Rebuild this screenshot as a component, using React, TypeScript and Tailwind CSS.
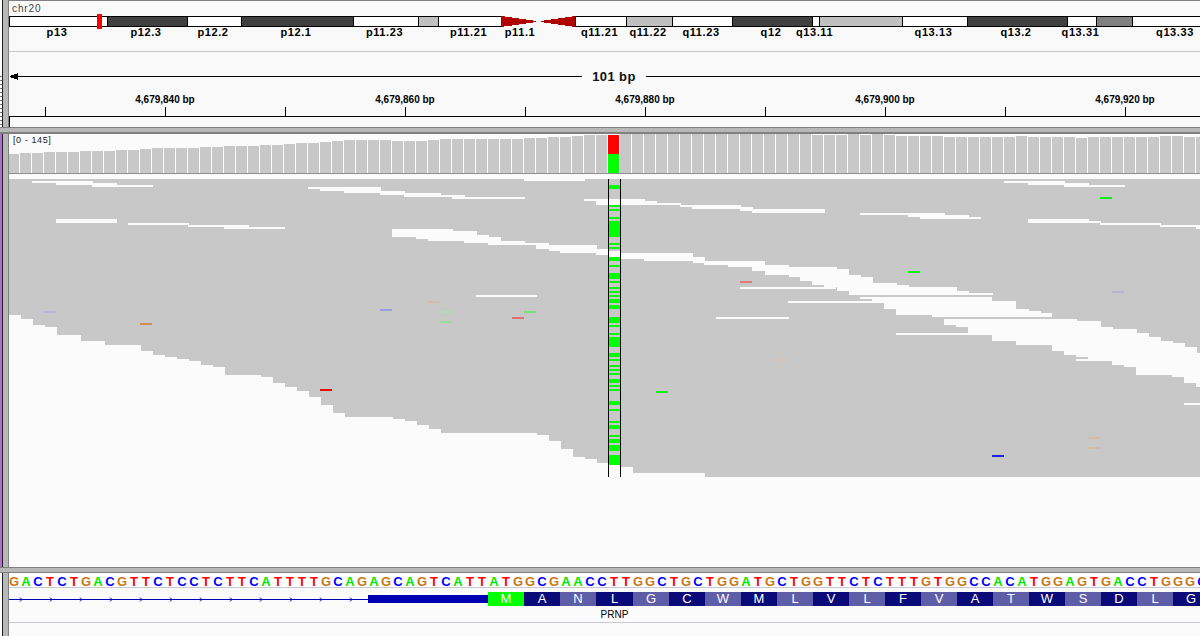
const sans = "font-['Liberation_Sans',Arial,sans-serif]"

interface Band {
  name: string
  width: number
  color: string
  centromere?: 'left' | 'right'
}

const BANDS: Band[] = [
  { name: 'p13', width: 98, color: 'bg-white' },
  { name: 'p12.3', width: 80, color: 'bg-[#404040]' },
  { name: 'p12.2', width: 54, color: 'bg-white' },
  { name: 'p12.1', width: 112, color: 'bg-[#404040]' },
  { name: 'p11.23', width: 65, color: 'bg-white' },
  { name: '', width: 20, color: 'bg-[#c0c0c0]' },
  { name: 'p11.21', width: 63, color: 'bg-white' },
  { name: 'p11.1', width: 40, color: '', centromere: 'left' },
  { name: '', width: 34, color: '', centromere: 'right' },
  { name: 'q11.21', width: 51, color: 'bg-white' },
  { name: 'q11.22', width: 46, color: 'bg-[#c0c0c0]' },
  { name: 'q11.23', width: 60, color: 'bg-white' },
  { name: 'q12', width: 80, color: 'bg-[#404040]' },
  { name: 'q13.11', width: 7, color: 'bg-white' },
  { name: '', width: 83, color: 'bg-[#c0c0c0]' },
  { name: 'q13.13', width: 65, color: 'bg-white' },
  { name: 'q13.2', width: 100, color: 'bg-[#404040]' },
  { name: 'q13.31', width: 29, color: 'bg-white' },
  { name: '', width: 36, color: 'bg-[#808080]' },
  { name: 'q13.33', width: 88, color: 'bg-white' },
]

const POSITIONS = ['4,679,840 bp', '4,679,860 bp', '4,679,880 bp', '4,679,900 bp', '4,679,920 bp']

const COVERAGE_RUNS: [number, number][] = [
  [154, 1], [153, 2], [152, 3], [151, 3], [150, 2], [149, 1], [148, 4], [147, 2], [146, 3], [145, 2],
  [144, 1], [143, 2], [142, 1], [141, 1], [140, 4], [141, 3], [140, 1], [139, 7], [138, 2], [137, 2],
  [136, 1], [135, 3], [134, 16], [135, 3], [134, 1], [135, 1], [134, 1], [135, 1], [136, 4], [137, 6],
  [136, 1], [137, 4], [138, 1], [137, 6], [136, 2], [137, 2],
]
const COVERAGE_TOPS = COVERAGE_RUNS.flatMap(([top, n]) => Array<number>(n).fill(top))

// lower edge of the pileup: [x, y] steps
const PROFILE: [number, number][] = [
  [9, 315], [21, 319], [33, 325], [45, 327], [57, 335], [81, 341], [105, 345], [141, 351], [153, 355],
  [165, 357], [177, 359], [189, 361], [201, 365], [213, 367], [225, 375], [261, 377], [273, 383],
  [285, 387], [297, 391], [309, 397], [321, 405], [333, 413], [345, 417], [393, 419], [405, 421],
  [417, 425], [429, 429], [441, 433], [537, 435], [549, 441], [561, 449], [573, 457], [585, 459],
  [597, 463], [609, 465], [621, 467], [633, 473], [705, 477], [1200, 477],
]

// gaps between reads: x0, x1, y0, y1
const GAPS: number[][] = [
  [9, 1200, 174, 179], [32, 56, 181, 183], [56, 93, 181, 185], [92, 117, 183, 187], [117, 153, 185, 187],
  [308, 320, 187, 189], [320, 344, 187, 191], [344, 381, 187, 193], [380, 405, 191, 195], [404, 441, 193, 197],
  [441, 465, 195, 197], [452, 525, 197, 199], [524, 585, 179, 181], [584, 645, 199, 201], [596, 645, 199, 205],
  [645, 657, 201, 205], [657, 681, 203, 205], [680, 692, 205, 207], [692, 741, 205, 209], [740, 753, 207, 211],
  [752, 825, 209, 213], [860, 908, 213, 215], [908, 920, 213, 217], [920, 945, 213, 219], [945, 969, 215, 219],
  [969, 981, 217, 219], [1004, 1028, 181, 183], [1028, 1065, 181, 185], [1064, 1089, 183, 187], [1089, 1125, 185, 187],
  [1028, 1089, 219, 223], [1089, 1101, 221, 223], [1100, 1161, 223, 225], [1160, 1196, 225, 227], [1196, 1200, 225, 229],
  [56, 117, 219, 223], [128, 189, 223, 225], [188, 224, 225, 227], [224, 249, 225, 229], [249, 285, 227, 229],
  [392, 453, 229, 237], [416, 428, 237, 239], [428, 464, 237, 241], [453, 477, 231, 241], [464, 489, 235, 243],
  [489, 501, 237, 245], [488, 525, 241, 245], [525, 536, 243, 245], [536, 549, 243, 249], [549, 560, 245, 251],
  [560, 597, 245, 253], [596, 609, 249, 255], [609, 621, 251, 257], [621, 644, 253, 259], [644, 693, 253, 261],
  [693, 705, 257, 263], [704, 728, 261, 265], [728, 752, 261, 267], [752, 765, 261, 271], [765, 789, 265, 275],
  [789, 800, 267, 277], [800, 812, 267, 281], [812, 824, 267, 285], [824, 837, 267, 287], [837, 849, 269, 291],
  [849, 861, 275, 295], [861, 873, 277, 295], [873, 897, 283, 295], [897, 909, 285, 295], [909, 957, 287, 295],
  [957, 969, 291, 295], [969, 993, 293, 295], [740, 836, 287, 289], [788, 872, 301, 303], [716, 789, 317, 319],
  [476, 537, 295, 297], [860, 872, 297, 299], [872, 884, 297, 303], [884, 896, 297, 309], [896, 932, 297, 315],
  [932, 944, 297, 317], [944, 956, 297, 325], [956, 968, 297, 327], [968, 992, 297, 335], [896, 968, 333, 335],
  [992, 1016, 301, 341], [1016, 1029, 309, 345], [1029, 1041, 311, 345], [1041, 1052, 313, 345], [1052, 1064, 319, 351],
  [1064, 1076, 319, 355], [1076, 1077, 319, 361], [1077, 1101, 321, 361], [1101, 1112, 327, 361], [1112, 1113, 327, 365],
  [1113, 1124, 329, 365], [1124, 1136, 329, 367], [1136, 1137, 329, 375], [1137, 1149, 333, 375], [1149, 1161, 337, 375],
  [1161, 1172, 341, 375], [1172, 1173, 341, 377], [1173, 1184, 343, 377], [1184, 1185, 343, 383], [1185, 1196, 347, 383],
  [1196, 1197, 347, 387], [1197, 1200, 353, 387], [1184, 1200, 403, 405],
]

// reads that cross back over a gap
const STRIPS: number[][] = [[1076, 1088, 357, 359], [476, 488, 281, 283], [944, 1053, 317, 319]]

const MISMATCHES: [number, number, string][] = [
  [44, 311, '#b5b5d5'], [140, 323, '#cc9050'], [320, 389, '#ff0000'], [380, 309, '#9c9cdc'], [428, 301, '#d0bdb0'],
  [440, 311, '#b8d8b8'], [440, 321, '#a0d8a0'], [524, 311, '#78e078'], [512, 317, '#e07070'], [740, 281, '#e57a7a'],
  [776, 359, '#d4c4b8'], [656, 391, '#00ff00'], [1100, 197, '#10f010'], [908, 271, '#00ff00'], [1112, 291, '#b4b4d4'],
  [1088, 437, '#d0bca8'], [1088, 447, '#d0bca8'], [992, 455, '#2020f0'],
]

const SNP_ROWS: [number, number][] = [
  [185, 189], [205, 207], [209, 211], [217, 219], [221, 237], [243, 245], [247, 249], [257, 261], [265, 267],
  [273, 279], [281, 283], [287, 289], [291, 293], [295, 297], [299, 303], [305, 309], [317, 323], [325, 327],
  [333, 335], [337, 347], [353, 357], [359, 361], [365, 367], [369, 371], [373, 375], [379, 383], [385, 387],
  [389, 391], [401, 405], [409, 411], [421, 423], [425, 429], [435, 437], [439, 443], [445, 451], [455, 465],
]

const SEQUENCE =
  'GACTCTGACGTTCTCCTCTTCATTTTGCAGAGCAGTCATTATGGCGAACCTTGGCTGCTGGATGCTGGTTCTCTTTGTGGCCACATGGAGTGACCTGGGC'

const BASE_COLOR: Record<string, string> = {
  A: 'text-[#00e800]',
  C: 'text-[#0000ff]',
  G: 'text-[#c87818]',
  T: 'text-[#ff0000]',
}

const AMINO_ACIDS = 'ANLGCWMLVLFVATWSDLG'.split('')

function Gutter({ strip, children }: { strip: string; children?: React.ReactNode }) {
  return (
    <div className="flex w-[9px] shrink-0">
      <div className={`flex w-[2px] flex-col justify-end ${strip}`}>{children}</div>
      <div className="w-[6px] border-l border-[#202020] bg-[#b8b8b8]" />
      <div className="w-px bg-[#808080]" />
    </div>
  )
}

function Divider() {
  return <div className="h-[6px] shrink-0 border-y border-[#808080] bg-[#b8b8b8]" />
}

function Centromere({ side }: { side: 'left' | 'right' }) {
  const points = side === 'left' ? '0,0 35,5 35,6 0,11' : '34,0 0,5 0,6 34,11'
  return (
    <svg width="100%" height="11" className="block" shapeRendering="crispEdges">
      <polygon points={points} fill="#b00000" />
    </svg>
  )
}

function Ideogram() {
  return (
    <div className="relative">
      <div className="flex h-[11px]">
        {BANDS.map((band, i) =>
          band.centromere ? (
            <div key={i} className="shrink-0" style={{ width: band.width }}>
              <Centromere side={band.centromere} />
            </div>
          ) : (
            <div
              key={i}
              className={`shrink-0 border-y border-l border-black ${band.color}`}
              style={{ width: band.width }}
            />
          ),
        )}
      </div>
      <div className="absolute left-[88px] top-[-2px] h-[15px] w-[5px] bg-[#ff0000]" />
      <div className="-ml-px mt-[-2px] flex h-[14px]">
        {BANDS.map((band, i) => (
          <div key={i} className="flex shrink-0 justify-center" style={{ width: band.width }}>
            <span className="whitespace-nowrap text-[11px] leading-[14px] font-bold tracking-[0.6px] text-black">
              {band.name}
            </span>
          </div>
        ))}
      </div>
    </div>
  )
}

function Ruler() {
  return (
    <div className="flex h-[64px] flex-col">
      <div className="mt-[16px] flex h-[17px] items-center pl-px">
        <svg width="8" height="7" className="shrink-0" shapeRendering="crispEdges">
          <polygon points="0,3 8,0 8,7 0,4" fill="#000" />
        </svg>
        <div className="h-px w-[564px] bg-black" />
        <span className="w-[64px] text-center text-[13px] leading-[17px] font-bold tracking-[0.4px] text-[#111]">
          101 bp
        </span>
        <div className="h-px flex-1 bg-black" />
      </div>
      <div className="mt-[8px] flex h-[13px] overflow-hidden pl-[36px]">
        {POSITIONS.map((p) => (
          <div key={p} className="w-[240px] shrink-0 text-center text-[10px] leading-[13px] font-bold text-black">
            {p}
          </div>
        ))}
      </div>
      <div className="mt-px flex h-[9px] overflow-hidden pl-[36px]">
        {Array.from({ length: 10 }).map((_, i) => (
          <div key={i} className="w-[120px] shrink-0 border-l border-black" />
        ))}
      </div>
    </div>
  )
}

function TopPanel() {
  return (
    <div className="flex h-[127px] shrink-0">
      <Gutter strip="bg-white">
        <div className="h-[51px] bg-[repeating-linear-gradient(to_bottom,#777_0,#777_1px,transparent_1px,transparent_4px)]" />
      </Gutter>
      <div className={`flex min-w-0 flex-1 flex-col overflow-hidden border-t border-[#808080] bg-[#f9f9f9] ${sans}`}>
        <div className="h-[15px] pl-[3px] text-[10px] leading-[15px] tracking-[0.9px] text-[#444]">chr20</div>
        <Ideogram />
        <div className="mt-[12px] h-px bg-[#c8c8c8]" />
        <Ruler />
        <div className="h-[11px] border-t border-l border-black" />
      </div>
    </div>
  )
}

function Coverage() {
  return (
    <div className="relative h-[40px] shrink-0 border-b border-[#909090]">
      <svg viewBox="9 134 1191 39" width="1191" height="39" className="block" shapeRendering="crispEdges">
        {COVERAGE_TOPS.map((top, k) => {
          const x = 8 + 12 * k
          if (k === 50) {
            return (
              <g key={k}>
                <rect x={x} y={top} width={11} height={19} fill="#ff0000" />
                <rect x={x} y={154} width={11} height={19} fill="#00ff00" />
              </g>
            )
          }
          return <rect key={k} x={x} y={top} width={11} height={173 - top} fill="#c8c8c8" />
        })}
      </svg>
      <span className="absolute left-[4px] top-[1px] text-[9px] leading-[11px] tracking-[0.6px] text-[#222]">
        [0 - 145]
      </span>
    </div>
  )
}

function Pileup() {
  return (
    <svg viewBox="9 174 1191 393" width="1191" height="393" className="block" shapeRendering="crispEdges">
      {PROFILE.slice(0, -1).map(([x, y], i) => (
        <rect key={x} x={x} y={179} width={PROFILE[i + 1][0] - x} height={y - 179} fill="#c8c8c8" />
      ))}
      {GAPS.map(([x0, x1, y0, y1], i) => (
        <rect key={i} x={x0} y={y0} width={x1 - x0} height={y1 - y0} fill="#fbfbfb" />
      ))}
      {STRIPS.map(([x0, x1, y0, y1], i) => (
        <rect key={i} x={x0} y={y0} width={x1 - x0} height={y1 - y0} fill="#c8c8c8" />
      ))}
      {MISMATCHES.map(([x, y, color]) => (
        <rect key={`${x}-${y}`} x={x} y={y} width={12} height={2} fill={color} />
      ))}
      {SNP_ROWS.map(([y0, y1]) => (
        <rect key={y0} x={609} y={y0} width={11} height={y1 - y0} fill="#00ff00" />
      ))}
      <rect x={608} y={179} width={1} height={298} fill="#000" />
      <rect x={620} y={179} width={1} height={298} fill="#000" />
    </svg>
  )
}

function DataPanel() {
  return (
    <div className="flex h-[433px] shrink-0">
      <Gutter strip="bg-[#b070d0]" />
      <div className={`min-w-0 flex-1 overflow-hidden bg-[#fbfbfb] ${sans}`}>
        <Coverage />
        <Pileup />
      </div>
    </div>
  )
}

function Intron() {
  const arrows = Array.from({ length: 12 }, (_, i) => 11 + 30 * i)
  return (
    <svg width="359" height="14" className="block shrink-0">
      <rect x={0} y={7} width={359} height={1} fill="#0000b2" />
      {arrows.map((x) => (
        <path key={x} d="M0 -2 L2 0 L0 2" transform={`translate(${x} 7.5)`} fill="none" stroke="#0000b2" />
      ))}
    </svg>
  )
}

function GeneTrack() {
  return (
    <div className="flex h-[63px] shrink-0">
      <Gutter strip="bg-white" />
      <div className={`flex min-w-0 flex-1 flex-col overflow-hidden bg-[#fbfbfb] ${sans}`}>
        <div className="-ml-px flex h-[15px] shrink-0 border-b border-[#c8c8d4] bg-white">
          {SEQUENCE.split('').map((base, i) => (
            <span
              key={i}
              className={`w-[12px] shrink-0 text-center text-[13px] leading-[18px] font-bold ${BASE_COLOR[base]}`}
            >
              {base}
            </span>
          ))}
        </div>
        <div className="mt-[4px] flex h-[14px] shrink-0 items-center">
          <Intron />
          <div className="h-[8px] w-[120px] shrink-0 bg-[#0000b2]" />
          <div className="h-[14px] w-[36px] shrink-0 bg-[#00ff00] text-center text-[13px] leading-[14px] text-white">
            M
          </div>
          {AMINO_ACIDS.map((aa, i) => (
            <div
              key={i}
              className={`h-[14px] shrink-0 text-center text-[13px] leading-[14px] text-white ${
                i % 2 === 0 ? 'bg-[#0a0a78]' : 'bg-[#5e5ea8]'
              } ${i === 2 ? 'w-[37px]' : 'w-[36px]'}`}
            >
              {aa}
            </div>
          ))}
        </div>
        <div className="flex h-[16px] shrink-0 items-center justify-center pl-[20px] pt-[2px] text-[10px] leading-[14px] text-black">
          PRNP
        </div>
        <div className="h-px shrink-0 bg-[#c8c8d8]" />
      </div>
    </div>
  )
}

export default function App() {
  return (
    <div className="flex h-[636px] w-[1200px] flex-col overflow-hidden bg-white">
      <TopPanel />
      <Divider />
      <div className="h-px shrink-0 bg-[#808080]" />
      <DataPanel />
      <Divider />
      <GeneTrack />
    </div>
  )
}
